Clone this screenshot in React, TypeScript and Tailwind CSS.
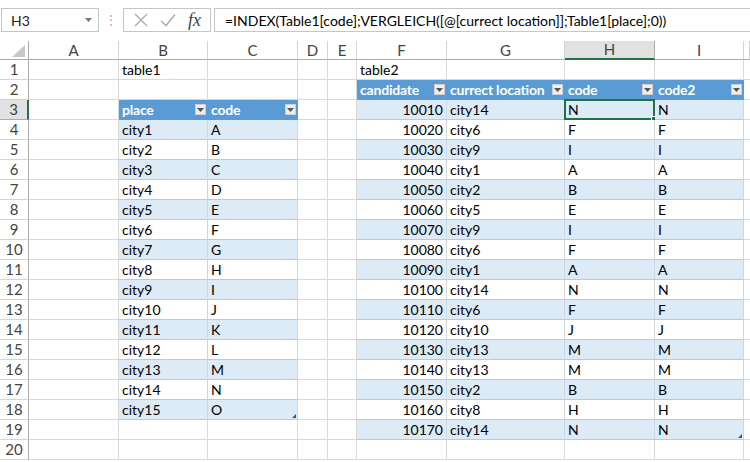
import React from "react";

type Kind = "empty" | "hdr" | "band" | "plain";
type Cell = { text?: string; kind: Kind; right?: boolean; filter?: boolean; last?: boolean };

const cols = ["A", "B", "C", "D", "E", "F", "G", "H", "I", ""];

const t1 = Array.from({ length: 15 }, (_, i) => [`city${i + 1}`, String.fromCharCode(65 + i)]);
const t2: [string, string, string][] = [
  ["10010", "city14", "N"],
  ["10020", "city6", "F"],
  ["10030", "city9", "I"],
  ["10040", "city1", "A"],
  ["10050", "city2", "B"],
  ["10060", "city5", "E"],
  ["10070", "city9", "I"],
  ["10080", "city6", "F"],
  ["10090", "city1", "A"],
  ["10100", "city14", "N"],
  ["10110", "city6", "F"],
  ["10120", "city10", "J"],
  ["10130", "city13", "M"],
  ["10140", "city13", "M"],
  ["10150", "city2", "B"],
  ["10160", "city8", "H"],
  ["10170", "city14", "N"],
];

function getCell(r: number, c: number): Cell {
  if (r === 1 && c === 1) return { text: "table1", kind: "empty" };
  if (r === 1 && c === 5) return { text: "table2", kind: "empty" };
  if (c === 1 || c === 2) {
    if (r === 3) return { text: c === 1 ? "place" : "code", kind: "hdr", filter: true, last: c === 2 };
    if (r >= 4 && r <= 18) {
      const d = t1[r - 4];
      return { text: d[c - 1], kind: (r - 4) % 2 === 0 ? "band" : "plain", last: c === 2 };
    }
  }
  if (c >= 5 && c <= 8) {
    if (r === 2)
      return {
        text: ["candidate", "currect location", "code", "code2"][c - 5],
        kind: "hdr",
        filter: true,
        last: c === 8,
      };
    if (r >= 3 && r <= 19) {
      const d = t2[r - 3];
      const txt = c === 5 ? d[0] : c === 6 ? d[1] : d[2];
      return { text: txt, kind: (r - 3) % 2 === 0 ? "band" : "plain", right: c === 5, last: c === 8 };
    }
  }
  return { kind: "empty" };
}

function FilterBtn() {
  return (
    <span className="flex h-[11px] w-[11px] shrink-0 items-center justify-center bg-[#eeeeee] border border-[#d0d0d0]">
      <svg width="7" height="4" viewBox="0 0 7 4">
        <polygon points="0,0 7,0 3.5,4" fill="#555" />
      </svg>
    </span>
  );
}

function SheetCell({ r, c }: { r: number; c: number }) {
  const cell = getCell(r, c);
  const selected = r === 3 && c === 7;
  const resize = (r === 18 && c === 2) || (r === 19 && c === 8);
  let cls =
    "relative flex items-center h-[20px] border-b border-r px-[3px] whitespace-nowrap text-[14px] leading-none ";
  if (cell.kind === "hdr")
    cls += "bg-[#5b9bd5] text-white font-bold border-r-[#5b9bd5] border-b-[#5b9bd5] justify-between pr-[1px] ";
  else if (cell.kind === "band") cls += "bg-[#ddebf7] text-black border-b-[#b4cbe3] border-r-[#c9d9ea] ";
  else if (cell.kind === "plain") cls += "bg-white text-black border-b-[#b4cbe3] border-r-[#d4d4d4] ";
  else cls += "bg-white text-black border-[#d9d9d9] ";
  if (cell.right) cls += "justify-end ";
  return (
    <div className={cls}>
      {cell.kind === "hdr" ? (
        <>
          <span className="tracking-[-0.2px]">{cell.text}</span>
          <FilterBtn />
        </>
      ) : (
        <span>{cell.text}</span>
      )}
      {selected && (
        <div className="pointer-events-none absolute left-[-1px] top-[-1px] right-[-1px] bottom-[-1px] border-2 border-[#217346]">
          <div className="absolute right-[-4px] bottom-[-4px] h-[6px] w-[6px] bg-[#217346] border border-white" />
        </div>
      )}
      {resize && (
        <svg className="absolute right-[1px] bottom-[1px]" width="4" height="4" viewBox="0 0 4 4">
          <polygon points="4,0 4,4 0,4" fill="#2f5597" />
        </svg>
      )}
    </div>
  );
}

export default function App() {
  const rows = Array.from({ length: 20 }, (_, i) => i + 1);
  return (
    <div
      className="w-[750px] h-[462px] overflow-hidden bg-white"
      style={{ fontFamily: "Lato, 'Liberation Sans', sans-serif" }}
    >
      {/* formula bar */}
      <div className="flex items-center h-[41px] pt-[8px] pb-[9px] pl-[1px]">
        <div className="flex items-center justify-between h-[24px] w-[98px] border border-[#c6c6c6] pl-[9px] pr-[6px] text-[14px] text-[#222]">
          <span>H3</span>
          <svg width="7" height="4" viewBox="0 0 7 4">
            <polygon points="0,0 7,0 3.5,4" fill="#777" />
          </svg>
        </div>
        <div className="w-[24px] flex justify-center text-[#aaa] text-[12px]">⋮</div>
        <div className="flex items-center h-[24px] w-[88px] border border-[#c6c6c6] gap-[12px] pl-[10px]">
          <svg width="14" height="14" viewBox="0 0 14 14" stroke="#b0b0b0" strokeWidth="1.4" fill="none">
            <line x1="1" y1="1" x2="13" y2="13" />
            <line x1="13" y1="1" x2="1" y2="13" />
          </svg>
          <svg width="16" height="14" viewBox="0 0 16 14" stroke="#b0b0b0" strokeWidth="1.6" fill="none">
            <polyline points="1,8 6,12.5 15,1.5" />
          </svg>
          <span
            className="text-[18px] italic text-[#444] leading-none"
            style={{ fontFamily: "'Liberation Serif', serif" }}
          >
            fx
          </span>
        </div>
        <div className="flex items-center h-[24px] flex-1 ml-[3px] border border-r-0 border-[#c6c6c6] pl-[10px] text-[14px] text-black whitespace-nowrap">
          =INDEX(Table1[code];VERGLEICH([@[currect location]];Table1[place];0))
        </div>
      </div>
      {/* sheet */}
      <div className="grid grid-cols-[29px_90px_89px_90px_30px_29px_90px_118px_90px_89px_6px]">
        <div className="relative h-[19px] border-r border-b border-[#ababab] bg-white">
          <svg className="absolute right-[3px] bottom-[2px]" width="13" height="12" viewBox="0 0 13 12">
            <polygon points="13,0 13,12 0,12" fill="#c8c8c8" />
          </svg>
        </div>
        {cols.map((c, i) => (
          <div
            key={i}
            className={
              "flex items-center justify-center h-[19px] border-r text-[15px] text-[#444] " +
              (c === "H"
                ? "bg-[#e1e1e1] border-r-[#ababab] border-b-2 border-b-[#217346]"
                : "bg-white border-r-[#d4d4d4] border-b border-b-[#ababab]")
            }
          >
            {c}
          </div>
        ))}
        {rows.map((r) => (
          <React.Fragment key={r}>
            <div
              className={
                "flex items-center justify-center h-[20px] border-b text-[15px] text-[#444] " +
                (r === 3
                  ? "bg-[#e1e1e1] border-b-[#ababab] border-r-2 border-r-[#217346]"
                  : "bg-white border-b-[#d4d4d4] border-r border-r-[#ababab]")
              }
            >
              {r}
            </div>
            {cols.map((_, c) => (
              <SheetCell key={c} r={r} c={c} />
            ))}
          </React.Fragment>
        ))}
      </div>
    </div>
  );
}
